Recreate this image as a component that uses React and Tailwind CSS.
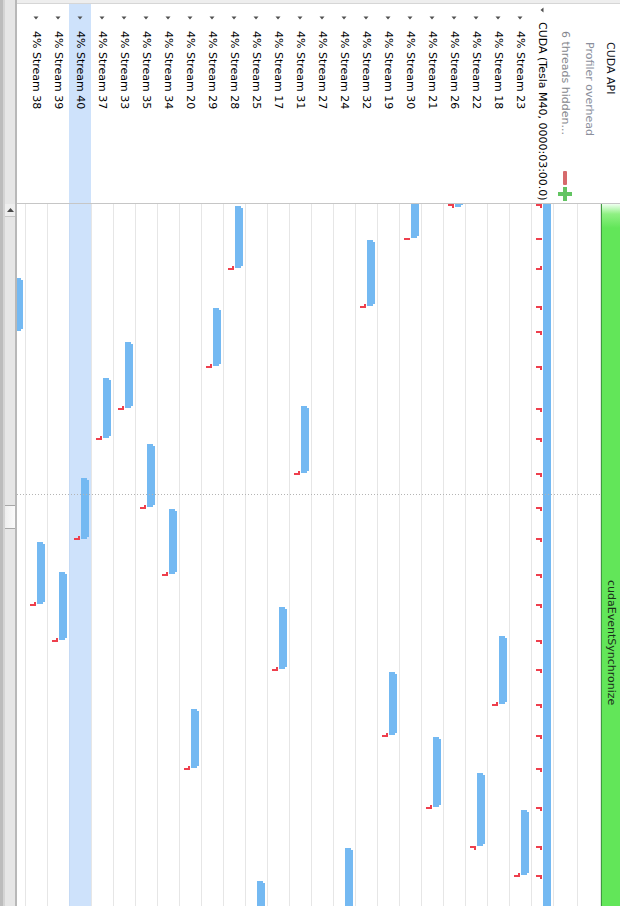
import React from 'react';

// screen y where the timeline canvas starts
const T0 = 204;

const streams = [
  { n: 23, bars: [[810, 875]], ticks: [[875, 'u']] },
  { n: 18, bars: [[636, 704]], ticks: [[704, 'u']] },
  { n: 22, bars: [[773, 846]], ticks: [[846, 'd']] },
  { n: 26, bars: [[180, 207]], ticks: [[204, 'd']] },
  { n: 21, bars: [[737, 807]], ticks: [[807, 'u']] },
  { n: 30, bars: [[190, 238]], ticks: [[238, 'n']] },
  { n: 19, bars: [[672, 735]], ticks: [[735, 'u']] },
  { n: 32, bars: [[240, 306]], ticks: [[306, 'u']] },
  { n: 24, bars: [[848, 930]], ticks: [] },
  { n: 27, bars: [], ticks: [] },
  { n: 31, bars: [[406, 473]], ticks: [[473, 'u']] },
  { n: 17, bars: [[607, 669]], ticks: [[669, 'u']] },
  { n: 25, bars: [[881, 930]], ticks: [] },
  { n: 28, bars: [[206, 268]], ticks: [[268, 'u']] },
  { n: 29, bars: [[308, 366]], ticks: [[366, 'u']] },
  { n: 20, bars: [[709, 768]], ticks: [[768, 'u']] },
  { n: 34, bars: [[509, 574]], ticks: [[574, 'u']] },
  { n: 35, bars: [[444, 507]], ticks: [[507, 'u']] },
  { n: 33, bars: [[342, 408]], ticks: [[408, 'u']] },
  { n: 37, bars: [[378, 438]], ticks: [[438, 'u']] },
  { n: 40, bars: [[478, 539]], ticks: [[538, 'u']], selected: true },
  { n: 39, bars: [[572, 640]], ticks: [[640, 'u']] },
  { n: 38, bars: [[542, 604]], ticks: [[604, 'u']] },
];

const deviceTicks = [
  [204, 'd'], [238, 'n'], [268, 'u'], [306, 'd'], [331, 'd'], [366, 'd'], [408, 'd'],
  [438, 'd'], [473, 'd'], [507, 'd'], [538, 'd'], [574, 'd'], [604, 'd'], [640, 'd'],
  [669, 'd'], [704, 'd'], [735, 'd'], [768, 'd'], [807, 'd'], [846, 'd'], [875, 'd'],
];

function Kernel({ y0, y1 }) {
  const top = y0 - T0;
  const h = y1 - y0;
  return (
    <>
      <div className="absolute left-[11px] w-[6px] bg-[#74b9f2]" style={{ top, height: h }} />
      <div className="absolute left-[17px] w-[2px] bg-[#74b9f2]" style={{ top: top + 2, height: Math.max(h - 4, 0) }} />
    </>
  );
}

function Tick({ y, hook }) {
  const top = y - T0;
  return (
    <>
      <div className="absolute left-[4px] h-[2px] w-[6px] bg-[#ee3f4d]" style={{ top }} />
      {hook !== 'n' && (
        <div
          className="absolute left-[8px] h-[2px] w-[2px] bg-[#ee3f4d]"
          style={{ top: hook === 'd' ? top + 2 : top - 2 }}
        />
      )}
    </>
  );
}

function VText({ children, className = '' }) {
  return (
    <span className={`whitespace-nowrap leading-[14px] [writing-mode:vertical-rl] ${className}`}>
      {children}
    </span>
  );
}

function Scrollbar() {
  return (
    <div className="flex h-full w-[17px] shrink-0 border-l-[3px] border-r-2 border-l-[#bcbcbc] border-r-[#b8b8b8] bg-[#e6e6e6]">
      <div className="w-[2px] bg-[#d4d4d4]" />
      <div className="flex flex-1 flex-col">
        <div className="h-[204px]" />
        <div className="flex h-[13px] items-center justify-center border-b border-[#c6c6c6] bg-[#eeeeee] pl-[1px]">
          <svg width="7" height="4" viewBox="0 0 7 4">
            <path d="M0 4L3.5 0L7 4Z" fill="#4a4a4a" />
          </svg>
        </div>
        <div className="mt-[288px] h-[24px] border-y border-[#a8a8a8] bg-[linear-gradient(to_right,#eeeeee,#fbfbfb)]" />
      </div>
    </div>
  );
}

function Labels() {
  return (
    <div className="flex h-[200px] flex-row-reverse overflow-hidden border-b border-[#c6c6c6] bg-white">
      <div className="flex h-full w-[20px] shrink-0 flex-col items-center">
        <VText className="mt-[38px] text-[#10131c]">CUDA API</VText>
      </div>
      <div className="flex h-full w-[23px] shrink-0 flex-col items-center">
        <VText className="mt-[38px] text-[#8b8f9c]">Profiler overhead</VText>
      </div>
      <div className="flex h-full w-[24px] shrink-0 flex-col items-center">
        <VText className="mt-[27px] text-[#85878d]">6 threads hidden...</VText>
        <div className="mb-[2px] mt-auto flex flex-col items-center gap-[2px]">
          <svg width="4" height="14" viewBox="0 0 4 14">
            <rect width="4" height="14" rx="1" fill="#d66a6c" />
          </svg>
          <svg width="14" height="14" viewBox="0 0 14 14">
            <path d="M5 0h4v5h5v4H9v5H5V9H0V5h5z" fill="#62c462" />
          </svg>
        </div>
      </div>
      <div className="flex h-full w-[22px] shrink-0 flex-col items-center">
        <svg className="mt-[3px]" width="4" height="6" viewBox="0 0 4 6">
          <path d="M3.5 0.5V5.5L0.5 3Z" fill="#505050" />
        </svg>
        <VText className="mt-[9px]">CUDA (Tesla M40, 0000:03:00.0)</VText>
      </div>
      {streams.map((s) => (
        <div
          key={s.n}
          className={`flex h-full w-[22px] shrink-0 flex-col items-center ${s.selected ? 'bg-[#cee2fb]' : ''}`}
        >
          <svg className="mt-[12px]" width="6" height="4" viewBox="0 0 6 4">
            <path d="M0.5 0.5H5.5L3 3.5Z" fill="#505050" />
          </svg>
          <VText className="mt-[11px]">4% Stream {s.n}</VText>
        </div>
      ))}
      <div className="h-full w-[22px] shrink-0" />
    </div>
  );
}

function Timeline() {
  return (
    <div className="relative flex flex-1 flex-row-reverse overflow-hidden bg-white">
      <div className="flex h-full w-[20px] shrink-0 border-l border-[#e6e6e6]">
        <div className="flex flex-1 flex-col items-center border-l border-[#3f9b3f] bg-[linear-gradient(to_bottom,#effff0_0px,#8ff083_10px,#62e659_24px)]">
          <VText className="mt-[376px] text-[#1b301b]">cudaEventSynchronize</VText>
        </div>
      </div>
      <div className="h-full w-[23px] shrink-0 border-l border-[#e6e6e6]" />
      <div className="h-full w-[24px] shrink-0 border-l border-[#e6e6e6]" />
      <div className="relative h-full w-[22px] shrink-0 border-l border-[#e6e6e6]">
        <div className="absolute inset-y-0 left-[11px] w-[8px] bg-[#74b9f2]" />
        {deviceTicks.map(([y, hook]) => (
          <Tick key={y} y={y} hook={hook} />
        ))}
      </div>
      {streams.map((s) => (
        <div
          key={s.n}
          className={`relative h-full w-[22px] shrink-0 border-l ${s.selected ? 'border-[#c5daf5] bg-[#cee2fb]' : 'border-[#e6e6e6]'}`}
        >
          {s.bars.map(([y0, y1]) => (
            <Kernel key={y0} y0={y0} y1={y1} />
          ))}
          {s.ticks.map(([y, hook]) => (
            <Tick key={y} y={y} hook={hook} />
          ))}
        </div>
      ))}
      <div className="relative h-full w-[22px] shrink-0 border-l border-[#e6e6e6]">
        <Kernel y0={278} y1={331} />
      </div>
      <div className="pointer-events-none absolute left-0 right-[20px] top-[290px] h-px bg-[repeating-linear-gradient(to_right,#b4b4b4_0px,#b4b4b4_1px,transparent_1px,transparent_3px)]" />
    </div>
  );
}

export default function App() {
  return (
    <div className="flex h-[906px] w-[620px] overflow-hidden bg-white font-['DejaVu_Sans',sans-serif] text-[11px] text-black">
      <Scrollbar />
      <div className="flex min-w-0 flex-1 flex-col">
        <div className="h-[4px] shrink-0 border-b border-[#d6d6d6] bg-[#eeeeee]" />
        <Labels />
        <Timeline />
      </div>
    </div>
  );
}
